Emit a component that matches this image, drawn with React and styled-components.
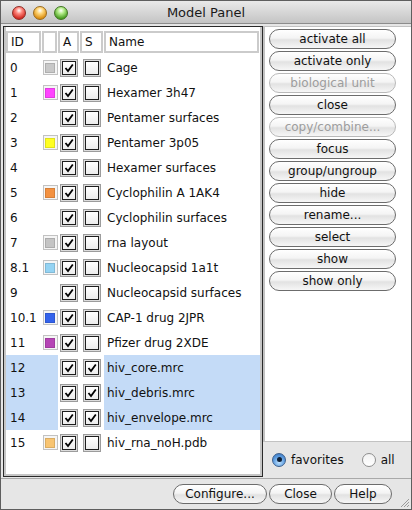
import styled, { createGlobalStyle } from "styled-components";

const GlobalStyle = createGlobalStyle`
  html, body {
    margin: 0;
    padding: 0;
    background: #ffffff;
  }
  body {
    font-family: "DejaVu Sans", "Liberation Sans", sans-serif;
  }
`;

const Window = styled.div`
  width: 412px;
  height: 510px;
  box-sizing: border-box;
  border: 1px solid #5e5e5e;
  display: flex;
  flex-direction: column;
  background: #e6e6e6;
  overflow: hidden;
`;

const TitleBar = styled.div`
  height: 22px;
  flex: none;
  border-bottom: 1px solid #8c8c8c;
  background: linear-gradient(#e9e9e9, #c4c4c4);
  display: flex;
  align-items: center;
  padding-left: 11px;
  position: relative;
`;

const Light = styled.span`
  width: 14px;
  height: 14px;
  border-radius: 50%;
  margin-right: 7px;
  box-sizing: border-box;
  border: 1px solid ${(p) => p.$edge};
  background: radial-gradient(circle at 50% 30%, #ffffff 0, ${(p) => p.$light} 30%, ${(p) => p.$color} 75%);
  margin-top: 1px;
`;

const Title = styled.div`
  position: absolute;
  left: 0;
  right: 0;
  top: 0;
  bottom: 0;
  display: flex;
  align-items: center;
  justify-content: center;
  font-size: 13px;
  color: #1a1a1a;
  pointer-events: none;
`;

const Main = styled.div`
  display: flex;
  padding: 2px 4px 0 2px;
  height: 451px;
  flex: none;
`;

const TableFrame = styled.div`
  width: 260px;
  flex: none;
  box-sizing: border-box;
  border: 1px solid #2a2a2a;
  background: #ffffff;
  display: flex;
  flex-direction: column;
`;

const TableInner = styled.div`
  flex: 1;
  padding-top: 4px;
  border: 2px solid #c6c6c6;
  border-top: none;
  display: flex;
  flex-direction: column;
`;

const Grid = styled.div`
  display: grid;
  grid-template-columns: 36px 16px 22px 24px 1fr;
  height: ${(p) => p.$h}px;
  margin-bottom: ${(p) => p.$mb || 0}px;
`;

const HeadCell = styled.div`
  box-sizing: border-box;
  border: 2px solid #cbcbcb;
  margin-right: 1px;
  font-size: 12px;
  color: #111;
  display: flex;
  align-items: center;
  padding-left: 3px;
  background: #fff;
`;

const Cell = styled.div`
  display: flex;
  align-items: center;
  justify-content: ${(p) => (p.$center ? "center" : "flex-start")};
  padding-left: ${(p) => p.$pad || 0}px;
  font-size: 12px;
  color: #111;
  white-space: nowrap;
  overflow: hidden;
  background: ${(p) => (p.$sel ? "#c4dbf7" : "transparent")};
`;

const Swatch = styled.span`
  width: 15px;
  height: 15px;
  box-sizing: border-box;
  border: 1px solid #c2c2c2;
  background: #f5f5f5;
  display: flex;
  align-items: center;
  justify-content: center;
  &::after {
    content: "";
    width: 10px;
    height: 10px;
    background: ${(p) => p.$color};
    box-shadow: inset 0 0 0 1px rgba(0, 0, 0, 0.12);
  }
`;

const CheckOuter = styled.span`
  width: 18px;
  height: 18px;
  box-sizing: border-box;
  border: 1px solid #9c9c9c;
  background: #dcdcdc;
  display: flex;
  align-items: center;
  justify-content: center;
`;

const CheckInner = styled.span`
  width: 14px;
  height: 14px;
  box-sizing: border-box;
  border: 1px solid #1e1e1e;
  background: linear-gradient(#ffffff, #ececec);
  display: flex;
  align-items: center;
  justify-content: center;
`;

const Side = styled.div`
  flex: 1;
  display: flex;
  flex-direction: column;
`;

const ButtonPanel = styled.div`
  height: 416px;
  box-sizing: border-box;
  border: 1px solid #c2c2c2;
  border-left: 2px solid #c2c2c2;
  background: #ffffff;
  padding: 2px 0 0 4px;
  display: flex;
  flex-direction: column;
  gap: 2px;
`;

const PillButton = styled.button`
  height: 20px;
  width: ${(p) => p.$w || 127}px;
  box-sizing: border-box;
  border: 1px solid ${(p) => (p.disabled ? "#b9b9b9" : "#6c6c6c")};
  border-radius: 10px;
  background: linear-gradient(#ffffff 0%, #f4f4f4 45%, #e2e2e2 55%, #f6f6f6 100%);
  color: ${(p) => (p.disabled ? "#9d9d9d" : "#111111")};
  font-family: "DejaVu Sans", "Liberation Sans", sans-serif;
  font-size: 12px;
  padding: 0;
  margin: 0;
  display: flex;
  align-items: center;
  justify-content: center;
  flex: none;
`;

const RadioRow = styled.div`
  flex: 1;
  display: flex;
  align-items: center;
  padding-left: 9px;
  font-size: 12px;
  color: #111;
`;

const RadioItem = styled.label`
  display: flex;
  align-items: center;
  gap: 5px;
  margin-right: 18px;
`;

const RadioDot = styled.span`
  width: 14px;
  height: 14px;
  box-sizing: border-box;
  border-radius: 50%;
  border: 1px solid ${(p) => (p.$on ? "#3c5f8c" : "#8e8e8e")};
  background: ${(p) =>
    p.$on
      ? "radial-gradient(circle at 50% 70%, #bfe2ff 0, #5e9de0 55%, #2f6bb5 100%)"
      : "linear-gradient(#f2f2f2, #ffffff)"};
  display: flex;
  align-items: center;
  justify-content: center;
  &::after {
    content: "";
    width: 5px;
    height: 5px;
    border-radius: 50%;
    background: ${(p) => (p.$on ? "#0e1e33" : "transparent")};
  }
`;

const Footer = styled.div`
  flex: 1;
  border-top: 1px solid #a9a9a9;
  margin-top: 1px;
  display: flex;
  align-items: center;
  justify-content: flex-end;
  gap: 2px;
  padding: 0 19px 0 0;
  position: relative;
`;

const Grip = styled.svg`
  position: absolute;
  right: 1px;
  bottom: 1px;
`;

const rows = [
  { id: "0", color: "#c8c8c8", name: "Cage" },
  { id: "1", color: "#ff44ff", name: "Hexamer 3h47" },
  { id: "2", name: "Pentamer surfaces" },
  { id: "3", color: "#ffff22", name: "Pentamer 3p05" },
  { id: "4", name: "Hexamer surfaces" },
  { id: "5", color: "#f39140", name: "Cyclophilin A 1AK4" },
  { id: "6", name: "Cyclophilin surfaces" },
  { id: "7", color: "#c4c4c4", name: "rna layout" },
  { id: "8.1", color: "#94d3f3", name: "Nucleocapsid 1a1t" },
  { id: "9", name: "Nucleocapsid surfaces" },
  { id: "10.1", color: "#3463ec", name: "CAP-1 drug 2JPR" },
  { id: "11", color: "#b545b5", name: "Pfizer drug 2XDE" },
  { id: "12", s: true, sel: true, name: "hiv_core.mrc" },
  { id: "13", s: true, sel: true, name: "hiv_debris.mrc" },
  { id: "14", s: true, sel: true, name: "hiv_envelope.mrc" },
  { id: "15", color: "#f8c471", name: "hiv_rna_noH.pdb" },
];

const buttons = [
  ["activate all"],
  ["activate only"],
  ["biological unit", true],
  ["close"],
  ["copy/combine...", true],
  ["focus"],
  ["group/ungroup"],
  ["hide"],
  ["rename..."],
  ["select"],
  ["show"],
  ["show only"],
];

const Check = ({ on }) => (
  <CheckOuter>
    <CheckInner>
      {on && (
        <svg width="10" height="10" viewBox="0 0 10 10">
          <polyline points="1.5,5 4,8 8.8,1.5" fill="none" stroke="#000" strokeWidth="1.8" />
        </svg>
      )}
    </CheckInner>
  </CheckOuter>
);

const App = () => {
  return (
    <>
      <GlobalStyle />
      <Window>
        <TitleBar>
          <Light $color="#d02a22" $light="#ff8a80" $edge="#8f2b24" />
          <Light $color="#dc8f12" $light="#ffd77a" $edge="#9a6a1c" />
          <Light $color="#4a9e22" $light="#b4ec8a" $edge="#3f7322" />
          <Title>Model Panel</Title>
        </TitleBar>
        <Main>
          <TableFrame>
            <TableInner>
              <Grid $h={22} $mb={2}>
                <HeadCell>ID</HeadCell>
                <HeadCell />
                <HeadCell>A</HeadCell>
                <HeadCell>S</HeadCell>
                <HeadCell>Name</HeadCell>
              </Grid>
              {rows.map((r) => (
                <Grid $h={25} key={r.id}>
                  <Cell $pad={4} $sel={r.sel}>{r.id}</Cell>
                  <Cell $center $sel={r.sel}>
                    {r.color && <Swatch $color={r.color} />}
                  </Cell>
                  <Cell $center>
                    <Check on />
                  </Cell>
                  <Cell $center>
                    <Check on={r.s} />
                  </Cell>
                  <Cell $pad={3} $sel={r.sel}>{r.name}</Cell>
                </Grid>
              ))}
            </TableInner>
          </TableFrame>
          <Side>
            <ButtonPanel>
              {buttons.map(([label, dis]) => (
                <PillButton key={label} disabled={dis}>
                  {label}
                </PillButton>
              ))}
            </ButtonPanel>
            <RadioRow>
              <RadioItem>
                <RadioDot $on />
                favorites
              </RadioItem>
              <RadioItem>
                <RadioDot />
                all
              </RadioItem>
            </RadioRow>
          </Side>
        </Main>
        <Footer>
          <PillButton $w={94}>Configure...</PillButton>
          <PillButton $w={63}>Close</PillButton>
          <PillButton $w={58}>Help</PillButton>
          <Grip width="11" height="11" viewBox="0 0 11 11">
            <line x1="10" y1="2" x2="2" y2="10" stroke="#9a9a9a" />
            <line x1="10" y1="5" x2="5" y2="10" stroke="#9a9a9a" />
            <line x1="10" y1="8" x2="8" y2="10" stroke="#9a9a9a" />
          </Grip>
        </Footer>
      </Window>
    </>
  );
};

export default App;
